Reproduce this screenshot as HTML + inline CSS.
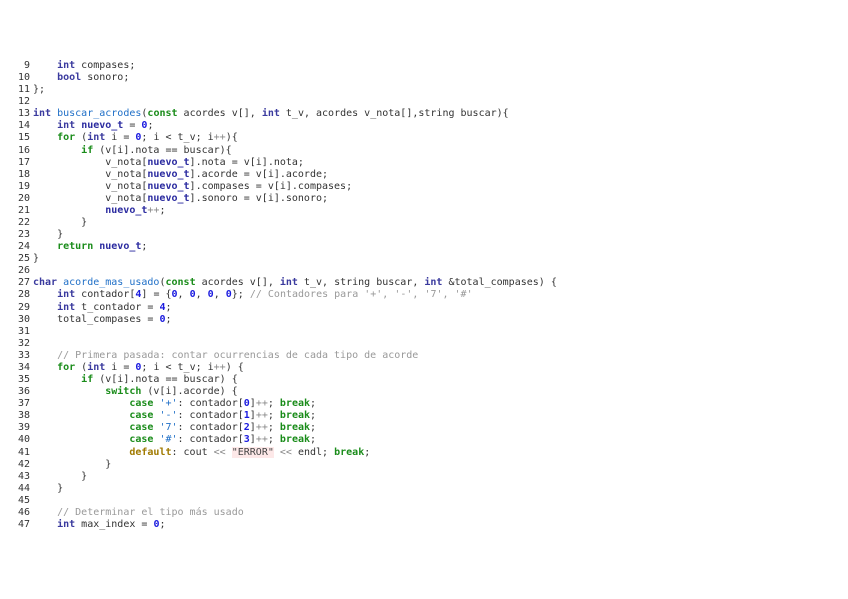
<!DOCTYPE html>
<html><head><meta charset="utf-8"><style>
html,body{margin:0;padding:0;background:#fff;width:848px;height:599px;overflow:hidden}
pre{margin:0;position:absolute;left:0;top:60px;font-family:"DejaVu Sans Mono",monospace;font-size:10px;line-height:12.08px;color:#333}
.l{display:block;white-space:pre}
.n{display:inline-block;width:30px;text-align:right;padding-right:3px;color:#333}
.t{color:#3a3a9e;font-weight:bold}
.k{color:#1a8c1a;font-weight:bold}
.f{color:#1f6fc7}
.d{color:#1a1adf;font-weight:bold}
.v{color:#2b2ba0;font-weight:bold}
.c{color:#999}
.y{color:#a07a00;font-weight:bold}
.s{background:#fde8e8;color:#444}
.p{color:#888}
</style></head><body><pre>
<span class="l"><span class="n">9</span>    <span class="t">int</span> compases;</span><span class="l"><span class="n">10</span>    <span class="t">bool</span> sonoro;</span><span class="l"><span class="n">11</span>};</span><span class="l"><span class="n">12</span></span><span class="l"><span class="n">13</span><span class="t">int</span> <span class="f">buscar_acrodes</span>(<span class="k">const</span> acordes v[], <span class="t">int</span> t_v, acordes v_nota[],string buscar){</span><span class="l"><span class="n">14</span>    <span class="t">int</span> <span class="v">nuevo_t</span> = <span class="d">0</span>;</span><span class="l"><span class="n">15</span>    <span class="k">for</span> (<span class="t">int</span> i = <span class="d">0</span>; i &lt; t_v; i<span class="p">++</span>){</span><span class="l"><span class="n">16</span>        <span class="k">if</span> (v[i].nota == buscar){</span><span class="l"><span class="n">17</span>            v_nota[<span class="v">nuevo_t</span>].nota = v[i].nota;</span><span class="l"><span class="n">18</span>            v_nota[<span class="v">nuevo_t</span>].acorde = v[i].acorde;</span><span class="l"><span class="n">19</span>            v_nota[<span class="v">nuevo_t</span>].compases = v[i].compases;</span><span class="l"><span class="n">20</span>            v_nota[<span class="v">nuevo_t</span>].sonoro = v[i].sonoro;</span><span class="l"><span class="n">21</span>            <span class="v">nuevo_t</span><span class="p">++</span>;</span><span class="l"><span class="n">22</span>        }</span><span class="l"><span class="n">23</span>    }</span><span class="l"><span class="n">24</span>    <span class="k">return</span> <span class="v">nuevo_t</span>;</span><span class="l"><span class="n">25</span>}</span><span class="l"><span class="n">26</span></span><span class="l"><span class="n">27</span><span class="t">char</span> <span class="f">acorde_mas_usado</span>(<span class="k">const</span> acordes v[], <span class="t">int</span> t_v, string buscar, <span class="t">int</span> &amp;total_compases) {</span><span class="l"><span class="n">28</span>    <span class="t">int</span> contador[<span class="d">4</span>] = {<span class="d">0</span>, <span class="d">0</span>, <span class="d">0</span>, <span class="d">0</span>}; <span class="c">// Contadores para '+', '-', '7', '#'</span></span><span class="l"><span class="n">29</span>    <span class="t">int</span> t_contador = <span class="d">4</span>;</span><span class="l"><span class="n">30</span>    total_compases = <span class="d">0</span>;</span><span class="l"><span class="n">31</span></span><span class="l"><span class="n">32</span></span><span class="l"><span class="n">33</span>    <span class="c">// Primera pasada: contar ocurrencias de cada tipo de acorde</span></span><span class="l"><span class="n">34</span>    <span class="k">for</span> (<span class="t">int</span> i = <span class="d">0</span>; i &lt; t_v; i<span class="p">++</span>) {</span><span class="l"><span class="n">35</span>        <span class="k">if</span> (v[i].nota == buscar) {</span><span class="l"><span class="n">36</span>            <span class="k">switch</span> (v[i].acorde) {</span><span class="l"><span class="n">37</span>                <span class="k">case</span> <span class="f">'+'</span>: contador[<span class="d">0</span>]<span class="p">++</span>; <span class="k">break</span>;</span><span class="l"><span class="n">38</span>                <span class="k">case</span> <span class="f">'-'</span>: contador[<span class="d">1</span>]<span class="p">++</span>; <span class="k">break</span>;</span><span class="l"><span class="n">39</span>                <span class="k">case</span> <span class="f">'7'</span>: contador[<span class="d">2</span>]<span class="p">++</span>; <span class="k">break</span>;</span><span class="l"><span class="n">40</span>                <span class="k">case</span> <span class="f">'#'</span>: contador[<span class="d">3</span>]<span class="p">++</span>; <span class="k">break</span>;</span><span class="l"><span class="n">41</span>                <span class="y">default</span>: cout <span class="p">&lt;&lt;</span> <span class="s">"ERROR"</span> <span class="p">&lt;&lt;</span> endl; <span class="k">break</span>;</span><span class="l"><span class="n">42</span>            }</span><span class="l"><span class="n">43</span>        }</span><span class="l"><span class="n">44</span>    }</span><span class="l"><span class="n">45</span></span><span class="l"><span class="n">46</span>    <span class="c">// Determinar el tipo más usado</span></span><span class="l"><span class="n">47</span>    <span class="t">int</span> max_index = <span class="d">0</span>;</span></pre>
</body></html>
